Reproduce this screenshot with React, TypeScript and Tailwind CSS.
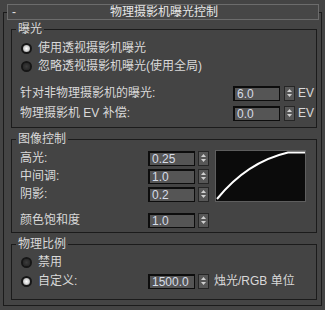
import React from "react";

const Spinner = () => (
  <div className="w-[11px] h-[15px] border border-[#262626] bg-[#575757] flex flex-col items-center justify-center gap-[2px]">
    <svg width="5" height="3" viewBox="0 0 5 3"><path d="M0 3 L2.5 0 L5 3 Z" fill="#d0d0d0" /></svg>
    <svg width="5" height="3" viewBox="0 0 5 3"><path d="M0 0 L2.5 3 L5 0 Z" fill="#d0d0d0" /></svg>
  </div>
);

const Input = ({ v }: { v: string }) => (
  <div className="w-[47px] h-[15px] border-t-2 border-l-2 border-r border-b border-[#0d0d0d] bg-[#555555] flex items-center pl-[2px] text-[12px] leading-[12px] text-[#d6dce8] overflow-hidden whitespace-nowrap">
    {v}
  </div>
);

const Radio = ({ on }: { on: boolean }) => (
  <div
    className={
      "w-[11px] h-[11px] rounded-full border-2 border-[#161616] shrink-0 " +
      (on
        ? "bg-[radial-gradient(circle,#ffffff_0%,#d8d8d8_45%,#8a8a8a_100%)]"
        : "bg-[radial-gradient(circle,#3c3c3c_0%,#2c2c2c_60%,#505050_100%)]")
    }
  />
);

const Legend = ({ t }: { t: string }) => (
  <div className="-mt-[8px] ml-[4px] w-fit px-[2px] bg-[#444444] h-[14px] leading-[14px] text-[12px]">{t}</div>
);

export default function App() {
  return (
    <div className="w-[325px] h-[310px] bg-[#444444] pt-[12px] pl-[3px] overflow-hidden text-[#d9d9d9] font-['Liberation_Sans','Noto_Sans_CJK_SC',sans-serif] text-[12px]">
      <div className="w-[319px] h-[294px] border border-[#1b1b1b]">
        {/* title bar */}
        <div className="-mt-[9px] ml-[3px] w-[312px] h-[16px] border border-[#6c6c6c] bg-[#464646] flex items-center relative">
          <span className="absolute left-[4px] top-[0px] leading-[14px] text-[#e0e0e0]">-</span>
          <div className="flex-1 text-center leading-[14px] text-[#e6e6e6] pl-[2px]">物理摄影机曝光控制</div>
        </div>

        {/* group 1 */}
        <div className="mt-[9px] ml-[7px] w-[306px] h-[99px] border border-[#1b1b1b]">
          <Legend t="曝光" />
          <div className="mt-[3px] h-[18px] flex items-center pl-[9px]">
            <Radio on={true} />
            <span className="ml-[6px] leading-[14px]">使用透视摄影机曝光</span>
          </div>
          <div className="h-[18px] flex items-center pl-[9px]">
            <Radio on={false} />
            <span className="ml-[6px] leading-[14px]">忽略透视摄影机曝光(使用全局)</span>
          </div>
          <div className="mt-[8px] h-[20px] flex items-center pl-[8px]">
            <span className="w-[213px] leading-[14px]">针对非物理摄影机的曝光:</span>
            <Input v="6.0" />
            <div className="ml-[4px]"><Spinner /></div>
            <span className="ml-[3px] leading-[14px]">EV</span>
          </div>
          <div className="h-[20px] flex items-center pl-[8px]">
            <span className="w-[213px] leading-[14px]">物理摄影机 EV 补偿:</span>
            <Input v="0.0" />
            <div className="ml-[4px]"><Spinner /></div>
            <span className="ml-[3px] leading-[14px]">EV</span>
          </div>
        </div>

        {/* group 2 */}
        <div className="mt-[11px] ml-[7px] w-[306px] h-[94px] border border-[#1b1b1b]">
          <Legend t="图像控制" />
          <div className="mt-[3px] flex">
            <div className="flex flex-col">
              {[
                ["高光:", "0.25"],
                ["中间调:", "1.0"],
                ["阴影:", "0.2"],
              ].map(([l, v]) => (
                <div key={l} className="h-[18px] flex items-center pl-[8px]">
                  <span className="w-[128px] leading-[14px]">{l}</span>
                  <Input v={v} />
                  <div className="ml-[3px]"><Spinner /></div>
                </div>
              ))}
            </div>
            <div className="ml-[6px] mt-[1px] w-[91px] h-[52px] border border-[#5e5e5e] bg-[#0b0b0b]">
              <svg width="89" height="50" viewBox="0 0 89 50">
                <path d="M1 48 Q31 11 72 1.5 L89 1.5" stroke="#ffffff" strokeWidth="2" fill="none" />
              </svg>
            </div>
          </div>
          <div className="mt-[8px] h-[18px] flex items-center pl-[8px]">
            <span className="w-[128px] leading-[14px]">颜色饱和度</span>
            <Input v="1.0" />
            <div className="ml-[3px]"><Spinner /></div>
          </div>
        </div>

        {/* group 3 */}
        <div className="mt-[11px] ml-[7px] w-[306px] h-[56px] border border-[#1b1b1b]">
          <Legend t="物理比例" />
          <div className="mt-[2px] h-[18px] flex items-center pl-[9px]">
            <Radio on={false} />
            <span className="ml-[6px] leading-[14px]">禁用</span>
          </div>
          <div className="h-[20px] flex items-center pl-[9px]">
            <div className="w-[127px] flex items-center">
              <Radio on={true} />
              <span className="ml-[6px] leading-[14px]">自定义:</span>
            </div>
            <Input v="1500.0" />
            <div className="ml-[3px]"><Spinner /></div>
            <span className="ml-[5px] leading-[14px]">烛光/RGB 单位</span>
          </div>
        </div>
      </div>
    </div>
  );
}
